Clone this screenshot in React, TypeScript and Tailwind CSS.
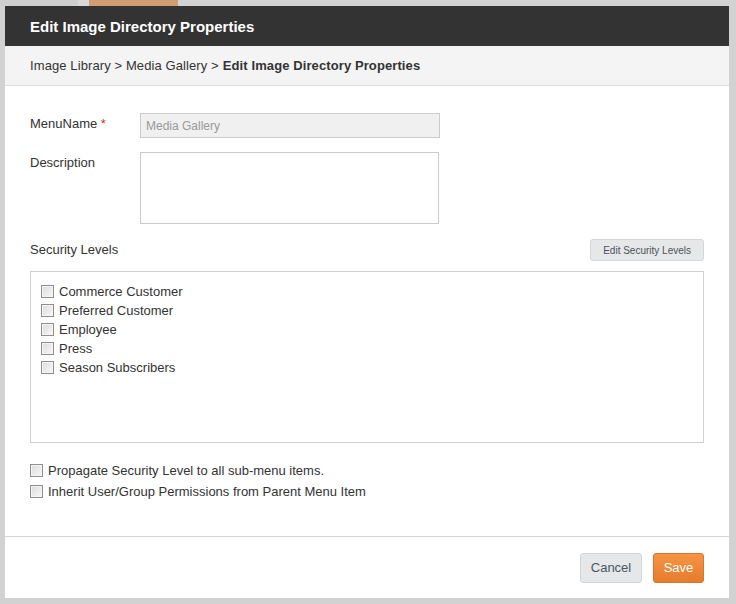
import React from 'react';

const levels = ['Commerce Customer', 'Preferred Customer', 'Employee', 'Press', 'Season Subscribers'];

function Box() {
  return (
    <span className="inline-block w-[13px] h-[13px] shrink-0 border border-[#8f8f8f] bg-gradient-to-br from-[#dcdcdc] to-[#f8f8f8] shadow-[inset_0_0_0_1px_#f4f4f4]" />
  );
}

export default function App() {
  return (
    <div className="w-[736px] h-[604px] bg-[#d2d2d2] flex flex-col font-['Liberation_Sans',Arial,sans-serif] text-[#333]">
      <div className="h-[6px] shrink-0 flex">
        <div className="w-[78px] bg-[#cfcfcf]" />
        <div className="w-[11px] bg-[#d9d9d9]" />
        <div className="w-[89px] bg-[#cf9c74]" />
      </div>
      <div className="ml-[5px] mr-[7px] h-[592px] bg-white flex flex-col">
        <div className="h-[40px] bg-[#333333] flex items-center px-[25px] pt-[2px]">
          <h1 className="text-white font-bold text-[15px]">Edit Image Directory Properties</h1>
        </div>
        <div className="h-[40px] bg-[#f4f4f4] border-b border-[#dcdcdc] flex items-center px-[25px] text-[13px] tracking-[0.1px]">
          <span>Image Library &gt; Media Gallery &gt; </span>
          <span className="font-bold ml-1">Edit Image Directory Properties</span>
        </div>
        <div className="flex-1 px-[25px] pt-[27px]">
          <div className="flex">
            <label className="w-[110px] text-[13px] pt-[1px]">
              MenuName <span className="text-[#c0392b]">*</span>
            </label>
            <div className="w-[300px] h-[25px] bg-[#f0f0f0] border border-[#cccccc] text-[12px] text-[#999] px-[5px] flex items-center">
              Media Gallery
            </div>
          </div>
          <div className="flex mt-[14px]">
            <label className="w-[110px] text-[13px] pt-[1px]">Description</label>
            <textarea className="w-[299px] h-[72px] border border-[#cccccc] resize-none outline-none" />
          </div>
          <div className="flex items-center justify-between mt-[15px]">
            <span className="text-[13px]">Security Levels</span>
            <button className="h-[22px] px-[12px] bg-[#e6e7e8] border border-[#d6d6d6] rounded-[3px] text-[10px] text-[#4a5260]">
              Edit Security Levels
            </button>
          </div>
          <div className="mt-[10px] h-[172px] border border-[#d0d0d0] pt-[13px] px-[10px] flex flex-col gap-[6px]">
            {levels.map((l) => (
              <div key={l} className="flex items-center gap-[5px] text-[13px] h-[13px]">
                <Box />
                <span>{l}</span>
              </div>
            ))}
          </div>
          <div className="mt-[21px] flex flex-col gap-[8px]">
            <div className="flex items-center gap-[5px] text-[13px] h-[13px]">
              <Box />
              <span>Propagate Security Level to all sub-menu items.</span>
            </div>
            <div className="flex items-center gap-[5px] text-[13px] h-[13px]">
              <Box />
              <span>Inherit User/Group Permissions from Parent Menu Item</span>
            </div>
          </div>
        </div>
        <div className="h-[62px] border-t border-[#d6d6d6] flex items-center justify-end gap-[11px] pr-[25px] pt-[1px]">
          <button className="w-[62px] h-[30px] bg-[#e6e7e8] border border-[#d6d6d6] rounded-[3px] text-[13px] text-[#4a5666]">
            Cancel
          </button>
          <button className="w-[51px] h-[30px] bg-gradient-to-b from-[#f69443] to-[#e57c2c] border border-[#d8772b] rounded-[3px] text-[13px] text-white">
            Save
          </button>
        </div>
      </div>
      <div className="flex-1" />
    </div>
  );
}
